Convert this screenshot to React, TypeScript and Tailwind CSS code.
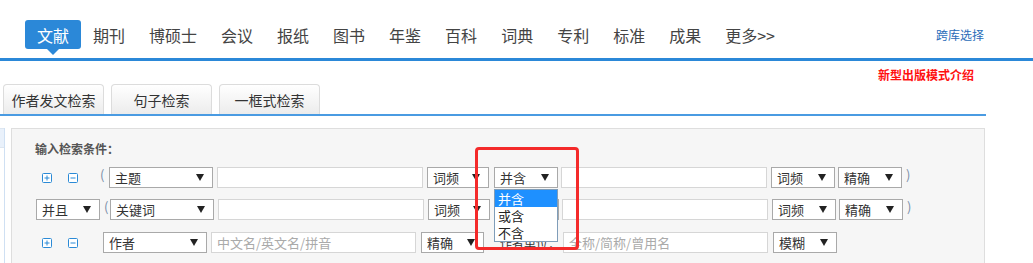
const navItems = ["期刊", "博硕士", "会议", "报纸", "图书", "年鉴", "百科", "词典", "专利", "标准", "成果", "更多>>"];
const searchTabs = ["作者发文检索", "句子检索", "一框式检索"];

const Caret = () => (
    <svg width="8" height="7" viewBox="0 0 8 7" className="shrink-0">
        <path d="M0 0h8L4 7z" fill="#222" />
    </svg>
);

const PlusBox = () => (
    <svg width="10" height="10" viewBox="0 0 10 10" className="shrink-0">
        <rect x="0.5" y="0.5" width="9" height="9" rx="1" fill="#fff" stroke="#2b8ad6" />
        <path d="M2.5 5h5M5 2.5v5" stroke="#2b8ad6" />
    </svg>
);

const MinusBox = () => (
    <svg width="10" height="10" viewBox="0 0 10 10" className="shrink-0">
        <rect x="0.5" y="0.5" width="9" height="9" rx="1" fill="#fff" stroke="#2b8ad6" />
        <path d="M2.5 5h5" stroke="#2b8ad6" />
    </svg>
);

const Select = ({ label, className }: { label: string; className: string }) => (
    <div
        className={`flex h-[21px] shrink-0 items-center justify-between border border-[#a9a9a9] bg-white pl-[5px] pr-[8px] text-[13px] leading-none text-[#333] ${className}`}
    >
        <span>{label}</span>
        <Caret />
    </div>
);

const Input = ({ placeholder, className }: { placeholder?: string; className: string }) => (
    <div
        className={`flex h-[21px] shrink-0 items-center border border-[#d6d6d6] bg-white pl-[5px] text-[13px] leading-none text-[#aaa] ${className}`}
    >
        {placeholder}
    </div>
);

const Paren = ({ children, className }: { children: string; className: string }) => (
    <span className={`shrink-0 self-start pt-[1px] text-[13px] leading-[14px] text-[#7a8ea8] ${className}`}>{children}</span>
);

const App = () => {
    return (
        <div className="relative h-[263px] w-[1033px] overflow-hidden bg-white font-['Noto_Sans_CJK_SC','Liberation_Sans',sans-serif]">
            {/* top nav */}
            <div className="flex h-[61px] items-start border-b-[3px] border-[#2b88d8] pl-[25px] pt-[20px]">
                <div className="relative flex h-[29px] items-center rounded-[3px] bg-[#2b88d8] px-[12px] text-[16px] leading-none text-white">
                    文献
                    <span className="absolute left-1/2 top-full -translate-x-1/2 border-x-[6px] border-t-[6px] border-x-transparent border-t-[#2b88d8]" />
                </div>
                {navItems.map((item) => (
                    <div key={item} className="flex h-[29px] items-center px-[12px] text-[16px] leading-none text-[#444]">
                        {item}
                    </div>
                ))}
                <div className="ml-auto mr-[49px] flex h-[29px] items-center text-[12px] leading-none text-[#2a6cb8]">
                    跨库选择
                </div>
            </div>

            <div className="flex h-[23px] justify-end pr-[59px] pt-[8px]">
                <span className="text-[12px] font-bold leading-none text-[#ff1010]">新型出版模式介绍</span>
            </div>

            {/* search type tabs */}
            <div className="flex h-[30px] gap-[7px] pl-[3px]">
                {searchTabs.map((tab) => (
                    <div
                        key={tab}
                        className="flex w-[101px] items-center justify-center rounded-t-[4px] border border-b-0 border-[#dcdcdc] bg-linear-to-b from-white to-[#ececec] text-[14px] leading-none text-[#333]"
                    >
                        {tab}
                    </div>
                ))}
            </div>
            <div className="h-[2px] w-[986px] bg-[#4a9be2]" />

            <div className="mt-[12px] flex">
                <div className="h-[135px] w-[5px] border-r border-[#cfe0f3]">
                    <div className="h-[20px] border-y border-[#dde6f0] bg-[#e9f1fb]" />
                </div>
                <div className="ml-[6px] h-[135px] w-[974px] border-x border-t border-[#dedede] bg-[#f6f6f6] pt-[12px]">
                    <div className="ml-[23px] text-[12px] font-bold leading-[16px] text-[#555]">输入检索条件：</div>

                    {/* row 1 */}
                    <div className="mt-[10px] flex h-[21px] items-center">
                        <span className="ml-[30px]"><PlusBox /></span>
                        <span className="ml-[16px]"><MinusBox /></span>
                        <Paren className="ml-[22px] w-[9px]">(</Paren>
                        <Select label="主题" className="w-[104px]" />
                        <Input className="ml-[4px] w-[206px]" />
                        <Select label="词频" className="ml-[4px] w-[62px]" />
                        <div className="relative ml-[5px]">
                            <Select label="并含" className="w-[64px]" />
                            <div className="absolute left-0 top-[22px] z-10 w-[64px] border border-[#7f9db9] bg-white text-[13px] leading-none text-[#222]">
                                <div className="flex h-[17px] items-center bg-[#1e90ff] pl-[3px] text-white">并含</div>
                                <div className="flex h-[17px] items-center pl-[3px]">或含</div>
                                <div className="flex h-[17px] items-center pl-[3px]">不含</div>
                            </div>
                        </div>
                        <Input className="ml-[3px] w-[206px]" />
                        <Select label="词频" className="ml-[4px] w-[64px]" />
                        <Select label="精确" className="ml-[3px] w-[64px]" />
                        <Paren className="ml-[4px]">)</Paren>
                    </div>

                    {/* row 2 */}
                    <div className="mt-[11px] flex h-[21px] items-center">
                        <Select label="并且" className="ml-[24px] w-[64px]" />
                        <Paren className="ml-[4px] w-[6px]">(</Paren>
                        <Select label="关键词" className="w-[104px]" />
                        <Input className="ml-[4px] w-[206px]" />
                        <Select label="词频" className="ml-[4px] w-[62px]" />
                        <Select label="并含" className="ml-[5px] w-[64px]" />
                        <Input className="ml-[3px] w-[206px]" />
                        <Select label="词频" className="ml-[4px] w-[64px]" />
                        <Select label="精确" className="ml-[3px] w-[64px]" />
                        <Paren className="ml-[4px]">)</Paren>
                    </div>

                    {/* row 3 */}
                    <div className="mt-[12px] flex h-[21px] items-center">
                        <span className="ml-[30px]"><PlusBox /></span>
                        <span className="ml-[16px]"><MinusBox /></span>
                        <Select label="作者" className="ml-[25px] w-[104px]" />
                        <Input placeholder="中文名/英文名/拼音" className="ml-[4px] w-[205px]" />
                        <Select label="精确" className="ml-[5px] w-[63px]" />
                        <span className="ml-[16px] w-[62px] shrink-0 whitespace-nowrap text-[12px] leading-none text-[#333]">作者单位：</span>
                        <Input placeholder="全称/简称/曾用名" className="ml-[1px] w-[205px]" />
                        <Select label="模糊" className="ml-[5px] w-[64px]" />
                    </div>
                </div>
            </div>

            {/* annotation box */}
            <div className="pointer-events-none absolute left-[475px] top-[147px] z-20 h-[103px] w-[104px] rounded-[4px] border-[3px] border-[#f42a2a]" />
        </div>
    );
};

export default App;
